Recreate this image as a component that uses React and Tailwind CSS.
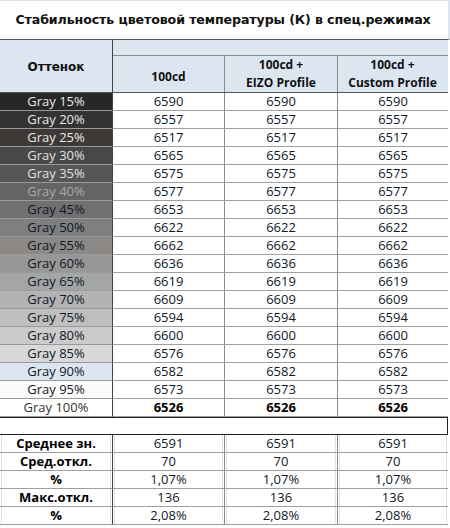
import React from 'react';

const cols = 'grid grid-cols-[113px_112px_113px_110px]';

// shades of the "Оттенок" column
const rows = [
  { label: 'Gray 15%', v: '6590', cell: 'bg-[#272727] text-[#e8e8e8]' },
  { label: 'Gray 20%', v: '6557', cell: 'bg-[#333333] text-[#e8e8e8]' },
  { label: 'Gray 25%', v: '6517', cell: 'bg-[#3d3936] text-[#e8e8e8]' },
  { label: 'Gray 30%', v: '6565', cell: 'bg-[#484848] text-[#e0e0e0]' },
  { label: 'Gray 35%', v: '6575', cell: 'bg-[#565656] text-[#e0e0e0]' },
  { label: 'Gray 40%', v: '6577', cell: 'bg-[#646464] text-[#a8a8a8]' },
  { label: 'Gray 45%', v: '6653', cell: 'bg-[#707070] text-[#111827]' },
  { label: 'Gray 50%', v: '6622', cell: 'bg-[#7f7f7f] text-[#111827]' },
  { label: 'Gray 55%', v: '6662', cell: 'bg-[#8b8885] text-[#111827]' },
  { label: 'Gray 60%', v: '6636', cell: 'bg-[#979797] text-[#111827]' },
  { label: 'Gray 65%', v: '6619', cell: 'bg-[#a4a6a6] text-[#111827]' },
  { label: 'Gray 70%', v: '6609', cell: 'bg-[#b2b2b2] text-[#111827]' },
  { label: 'Gray 75%', v: '6594', cell: 'bg-[#bfbfbf] text-[#111827]' },
  { label: 'Gray 80%', v: '6600', cell: 'bg-[#cbcbcb] text-[#111827]' },
  { label: 'Gray 85%', v: '6576', cell: 'bg-[#d8d8d8] text-[#111827]' },
  { label: 'Gray 90%', v: '6582', cell: 'bg-[#dce6f1] text-[#111827]' },
  { label: 'Gray 95%', v: '6573', cell: 'bg-[#fafafa] text-[#111827]' },
  { label: 'Gray 100%', v: '6526', cell: 'bg-white text-[#333333]', bold: true },
];

const summary = [
  { label: 'Среднее зн.', v: '6591' },
  { label: 'Сред.откл.', v: '70' },
  { label: '%', v: '1,07%' },
  { label: 'Макс.откл.', v: '136' },
  { label: '%', v: '2,08%' },
];

const App = () => {
  return (
    <div className="w-[450px] h-[528px] bg-white overflow-hidden font-['Open_Sans',sans-serif] text-[13px] text-[#111827]">
      {/* TITLE */}
      <div className="h-[40px] border-t border-r-2 border-[#dce6f1] flex items-center justify-center pr-[2px] border-b border-b-[#555555]">
        <h1 className="font-['DejaVu_Sans',sans-serif] font-bold text-[12.6px] text-[#111111] tracking-[-0.1px]">
          Стабильность цветовой температуры (К) в спец.режимах
        </h1>
      </div>

      <div className="w-[448px]">
        {/* HEADER */}
        <div className="flex h-[53px] bg-[#dce6f1] border-b border-[#555555]">
          <div className="w-[113px] flex items-center justify-center border-r border-[#444444] font-bold text-[12px] font-['DejaVu_Sans',sans-serif] text-[#111111] pt-[1px]">
            Оттенок
          </div>
          <div className="flex-1 flex flex-col">
            <div className="h-[17px] border-b border-[#8a8a8a]"></div>
            <div className="flex-1 grid grid-cols-[112px_113px_109px] font-bold text-[12px] text-[#111111] leading-[18px]">
              <div className="flex items-end justify-center pb-[6px] border-r border-[#8a8a8a]">100cd</div>
              <div className="flex flex-col items-center justify-center border-r border-[#8a8a8a]">
                <span>100cd +</span>
                <span>EIZO Profile</span>
              </div>
              <div className="flex flex-col items-center justify-center">
                <span>100cd +</span>
                <span>Custom Profile</span>
              </div>
            </div>
          </div>
        </div>

        {/* DATA ROWS */}
        {rows.map((r, i) => (
          <div key={i} className={`${cols} h-[18px] leading-[17px]`}>
            <div className={`${r.cell} text-center border-b border-[#9a9a9a] border-r border-r-[#444444]`}>{r.label}</div>
            <div className={`text-center border-b border-[#a0a0a0] border-r border-r-[#8a8a8a] ${r.bold ? 'font-bold text-black' : ''}`}>{r.v}</div>
            <div className={`text-center border-b border-[#a0a0a0] border-r border-r-[#8a8a8a] ${r.bold ? 'font-bold text-black' : ''}`}>{r.v}</div>
            <div className={`text-center border-b border-[#a0a0a0] ${r.bold ? 'font-bold text-black' : ''}`}>{r.v}</div>
          </div>
        ))}

        {/* EMPTY SEPARATOR */}
        <div className="h-[18px] border-t border-[#222222] border-b border-r border-[#222222]"></div>

        {/* SUMMARY */}
        {summary.map((s, i) => (
          <div key={i} className={`${cols} h-[18px] leading-[16px]`}>
            <div className="border-r border-[#444444] border-b border-b-[#a0a0a0]">
              <div className="h-full mx-[1px] border-x border-[#dde3ec] text-center font-bold text-black">{s.label}</div>
            </div>
            <div className="border-r border-[#8a8a8a] border-b border-b-[#a0a0a0]">
              <div className="h-full mx-[1px] border-x border-[#dde3ec] text-center">{s.v}</div>
            </div>
            <div className="border-r border-[#8a8a8a] border-b border-b-[#a0a0a0]">
              <div className="h-full mx-[1px] border-x border-[#dde3ec] text-center">{s.v}</div>
            </div>
            <div className="border-b border-[#a0a0a0]">
              <div className="h-full mx-[1px] border-x border-[#dde3ec] text-center">{s.v}</div>
            </div>
          </div>
        ))}
      </div>
    </div>
  );
};

export default App;
